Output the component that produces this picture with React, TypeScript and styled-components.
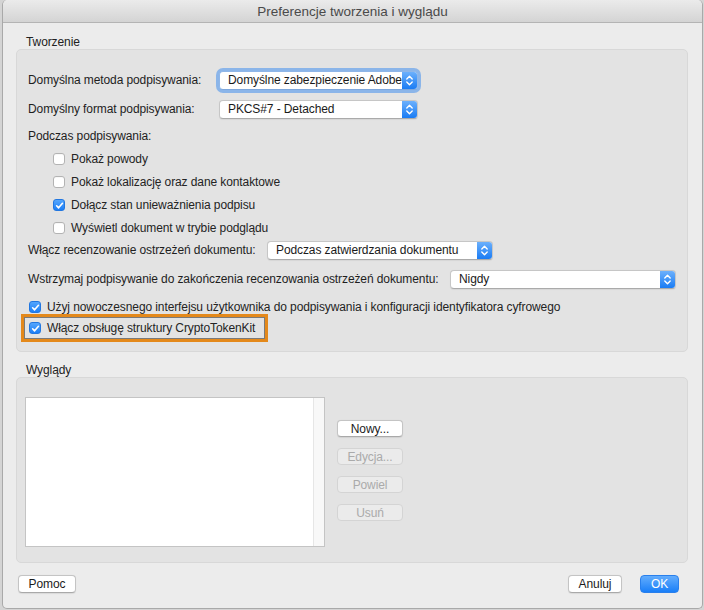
import React from "react";
import styled, { createGlobalStyle, css } from "styled-components";

const GlobalStyle = createGlobalStyle`
  html, body { margin: 0; padding: 0; background: #d4d4d4; }
  body {
    font-family: "Liberation Sans", Arial, sans-serif;
    font-size: 12px;
    letter-spacing: -0.1px;
    color: #1e1e1e;
  }
  * { box-sizing: border-box; }
`;

const Window = styled.div`
  margin-left: 2px;
  width: 701px;
  height: 609px;
  background: #ececec;
  border: 1px solid #a9a9a9;
  border-top: none;
  border-radius: 5px;
  display: flex;
  flex-direction: column;
  overflow: hidden;
`;

const TitleBar = styled.div`
  height: 23px;
  flex: none;
  background: linear-gradient(#ebebeb, #d4d4d4);
  border-bottom: 1px solid #b4b4b4;
  display: flex;
  align-items: center;
  justify-content: center;
  font-size: 13.5px;
  letter-spacing: 0;
  color: #4a4a4a;
  border-radius: 5px 5px 0 0;
`;

const Content = styled.div`
  flex: 1;
  display: flex;
  flex-direction: column;
  padding: 0 14px 0 13px;
`;

const SectionLabel = styled.div<{ $mt: number }>`
  margin-top: ${(p) => p.$mt}px;
  height: 14px;
  line-height: 14px;
  padding-left: 10px;
  color: #222;
`;

const Group = styled.div<{ $h: number }>`
  height: ${(p) => p.$h}px;
  background: #e3e3e3;
  border: 1px solid #d8d8d8;
  border-radius: 5px;
`;

const FormGroup = styled(Group)`
  display: flex;
  flex-direction: column;
  padding: 20px 12px 0 11px;
`;

const Row = styled.div<{ $mt: number; $indent?: number }>`
  margin-top: ${(p) => p.$mt}px;
  margin-left: ${(p) => p.$indent ?? 0}px;
  height: 20px;
  display: flex;
  align-items: center;
`;

const Label = styled.span<{ $w?: number }>`
  width: ${(p) => (p.$w ? `${p.$w}px` : "auto")};
  flex: none;
  white-space: nowrap;
`;

const SelectBox = styled.div<{ $w: number; $focus?: boolean }>`
  width: ${(p) => p.$w}px;
  height: 19px;
  flex: none;
  display: flex;
  background: #fff;
  border: 1px solid ${(p) => (p.$focus ? "#8fb6e8" : "#c6c6c6")};
  border-bottom-color: ${(p) => (p.$focus ? "#7ea7dc" : "#aaaaaa")};
  border-radius: 4px;
  overflow: hidden;
  box-shadow: ${(p) =>
    p.$focus ? "0 0 0 3px rgba(106, 163, 236, 0.72)" : "0 0.5px 1px rgba(0,0,0,0.06)"};
`;

const SelectText = styled.span`
  flex: 1;
  padding-left: 8px;
  line-height: 17px;
  white-space: nowrap;
  overflow: hidden;
  color: #1a1a1a;
`;

const Stepper = styled.span`
  width: 15px;
  flex: none;
  background: linear-gradient(#6cb0fc, #1a7cf4);
  display: flex;
  align-items: center;
  justify-content: center;
`;

const Box = styled.span<{ $checked?: boolean }>`
  width: 12px;
  height: 12px;
  flex: none;
  border-radius: 3px;
  display: flex;
  align-items: center;
  justify-content: center;
  ${(p) =>
    p.$checked
      ? css`
          background: linear-gradient(#55a6fd, #1b7ef6);
          border: 1px solid #2277e0;
        `
      : css`
          background: #fff;
          border: 1px solid #b3b3b3;
          box-shadow: inset 0 1px 0 rgba(0, 0, 0, 0.03);
        `}
`;

const CheckLabel = styled.span`
  margin-left: 6px;
  white-space: nowrap;
  color: #242424;
`;

const Highlight = styled.div`
  margin-top: -3px;
  margin-left: -7px;
  width: 247px;
  height: 28px;
  border: 3px solid #e4891b;
  box-shadow: inset 0 0 0 1px #7a7a7a;
  display: flex;
  align-items: center;
  padding-left: 5px;
`;

const AppearGroup = styled(Group)`
  display: flex;
  align-items: flex-start;
  gap: 12px;
  padding: 19px 0 0 8px;
`;

const ListBox = styled.div`
  width: 300px;
  height: 150px;
  background: #fff;
  border: 1px solid #c4c4c4;
  display: flex;
  justify-content: flex-end;
`;

const ScrollTrack = styled.div`
  width: 11px;
  background: #f8f8f8;
  border-left: 1px solid #e6e6e6;
`;

const ButtonColumn = styled.div`
  margin-top: 23px;
  display: flex;
  flex-direction: column;
  gap: 11px;
`;

const Button = styled.button<{ $w: number; $h?: number; $disabled?: boolean; $primary?: boolean }>`
  width: ${(p) => p.$w}px;
  height: ${(p) => p.$h ?? 17}px;
  padding: 0;
  font-family: inherit;
  font-size: 12px;
  letter-spacing: -0.1px;
  border-radius: 4px;
  display: flex;
  align-items: center;
  justify-content: center;
  ${(p) =>
    p.$primary
      ? css`
          background: linear-gradient(#63adfd, #1a7ff8);
          border: 1px solid #2a80ec;
          color: #fff;
        `
      : p.$disabled
      ? css`
          background: #ebebeb;
          border: 1px solid #d4d4d4;
          color: #aaaaaa;
        `
      : css`
          background: #fff;
          border: 1px solid #c4c4c4;
          border-bottom-color: #a9a9a9;
          color: #1b1b1b;
          box-shadow: 0 0.5px 1px rgba(0, 0, 0, 0.08);
        `}
`;

const BottomBar = styled.div`
  margin-top: 12px;
  display: flex;
  align-items: center;
  padding: 0 9px 0 2px;
`;

const Spacer = styled.div`
  flex: 1;
`;

const ButtonPair = styled.div`
  display: flex;
  gap: 18px;
`;

const Chevrons = () => (
  <svg width="9" height="13" viewBox="0 0 9 13">
    <path d="M1.8 5 L4.5 2.3 L7.2 5" fill="none" stroke="#fff" strokeWidth="1.4" strokeLinecap="round" strokeLinejoin="round" />
    <path d="M1.8 8 L4.5 10.7 L7.2 8" fill="none" stroke="#fff" strokeWidth="1.4" strokeLinecap="round" strokeLinejoin="round" />
  </svg>
);

const Select = ({ value, w, focus }: { value: string; w: number; focus?: boolean }) => (
  <SelectBox $w={w} $focus={focus}>
    <SelectText>{value}</SelectText>
    <Stepper>
      <Chevrons />
    </Stepper>
  </SelectBox>
);

const Check = ({ checked, label }: { checked?: boolean; label: string }) => (
  <>
    <Box $checked={checked}>
      {checked && (
        <svg width="9" height="9" viewBox="0 0 10 10">
          <path d="M1.8 5.3 L4 7.6 L8.3 2.6" fill="none" stroke="#fff" strokeWidth="1.8" strokeLinecap="round" strokeLinejoin="round" />
        </svg>
      )}
    </Box>
    <CheckLabel>{label}</CheckLabel>
  </>
);

export default function App() {
  return (
    <>
      <GlobalStyle />
      <Window>
        <TitleBar>Preferencje tworzenia i wyglądu</TitleBar>
        <Content>
          <SectionLabel $mt={12}>Tworzenie</SectionLabel>
          <FormGroup $h={303}>
            <Row $mt={0}>
              <Label $w={191}>Domyślna metoda podpisywania:</Label>
              <Select value="Domyślne zabezpieczenie Adobe" w={199} focus />
            </Row>
            <Row $mt={9}>
              <Label $w={191}>Domyślny format podpisywania:</Label>
              <Select value="PKCS#7 - Detached" w={199} />
            </Row>
            <Row $mt={7}>
              <Label>Podczas podpisywania:</Label>
            </Row>
            <Row $mt={3} $indent={25}>
              <Check label="Pokaż powody" />
            </Row>
            <Row $mt={3} $indent={25}>
              <Check label="Pokaż lokalizację oraz dane kontaktowe" />
            </Row>
            <Row $mt={3} $indent={25}>
              <Check checked label="Dołącz stan unieważnienia podpisu" />
            </Row>
            <Row $mt={3} $indent={25}>
              <Check label="Wyświetl dokument w trybie podglądu" />
            </Row>
            <Row $mt={2}>
              <Label $w={239}>Włącz recenzowanie ostrzeżeń dokumentu:</Label>
              <Select value="Podczas zatwierdzania dokumentu" w={226} />
            </Row>
            <Row $mt={9}>
              <Label $w={422}>Wstrzymaj podpisywanie do zakończenia recenzowania ostrzeżeń dokumentu:</Label>
              <Select value="Nigdy" w={226} />
            </Row>
            <Row $mt={8} $indent={1}>
              <Check checked label="Użyj nowoczesnego interfejsu użytkownika do podpisywania i konfiguracji identyfikatora cyfrowego" />
            </Row>
            <Highlight>
              <Check checked label="Włącz obsługę struktury CryptoTokenKit" />
            </Highlight>
          </FormGroup>

          <SectionLabel $mt={11}>Wyglądy</SectionLabel>
          <AppearGroup $h={186}>
            <ListBox>
              <ScrollTrack />
            </ListBox>
            <ButtonColumn>
              <Button $w={66}>Nowy...</Button>
              <Button $w={66} $disabled>Edycja...</Button>
              <Button $w={66} $disabled>Powiel</Button>
              <Button $w={66} $disabled>Usuń</Button>
            </ButtonColumn>
          </AppearGroup>

          <BottomBar>
            <Button $w={58} $h={18}>Pomoc</Button>
            <Spacer />
            <ButtonPair>
              <Button $w={54} $h={18}>Anuluj</Button>
              <Button $w={39} $h={18} $primary>OK</Button>
            </ButtonPair>
          </BottomBar>
        </Content>
      </Window>
    </>
  );
}
